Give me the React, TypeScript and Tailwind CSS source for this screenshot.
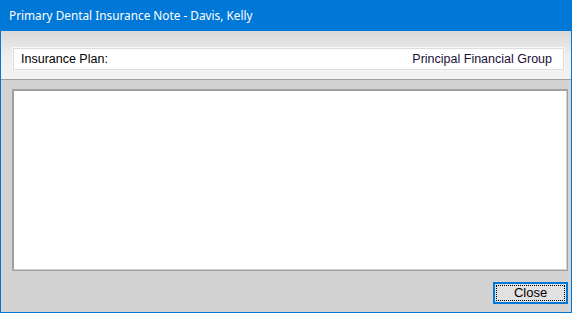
export default function App() {
  return (
    <div className="w-[572px] h-[313px] flex flex-col bg-[#0078d7] font-['Liberation_Sans',Arial,sans-serif]">
      <div className="h-[31px] shrink-0 flex items-center px-[9px] text-white text-[11.8px] font-['Noto_Sans','Open_Sans',sans-serif]">
        Primary Dental Insurance Note - Davis, Kelly
      </div>

      <div className="flex-1 flex flex-col mx-px mb-px bg-[#d3d3d3]">
        <div className="h-[49px] shrink-0 pt-[16px] pl-[11px] pr-[6px] border-b border-[#a0a0a0] bg-gradient-to-b from-[#d8d8d8] via-[#eeeeee] to-[#f2f2f2]">
          <div className="h-[24px] p-px bg-[#f7f7f7]">
            <div className="h-full flex items-center justify-between border border-[#dcdcdc] bg-white pl-[7px] pr-[11px] text-[12.5px] text-black">
              <span>Insurance Plan:</span>
              <span className="text-[#1b0f3a]">Principal Financial Group</span>
            </div>
          </div>
        </div>

        <div className="flex-1 mt-[9px] ml-[11px] mr-[3px] border border-[#a0a0a0]">
          <div className="h-full border-t border-l border-[#a0a0a0] border-b border-r border-b-[#d0d0d0] border-r-[#d0d0d0] bg-white" />
        </div>

        <div className="flex justify-end mt-[11px] mr-[3px] mb-[8px]">
          <button className="w-[75px] h-[22px] border-2 border-[#0078d7] bg-[#e1e1e1] p-px">
            <div className="h-full flex items-center justify-center border border-dotted border-black text-[13px] text-black">
              Close
            </div>
          </button>
        </div>
      </div>
    </div>
  );
}
